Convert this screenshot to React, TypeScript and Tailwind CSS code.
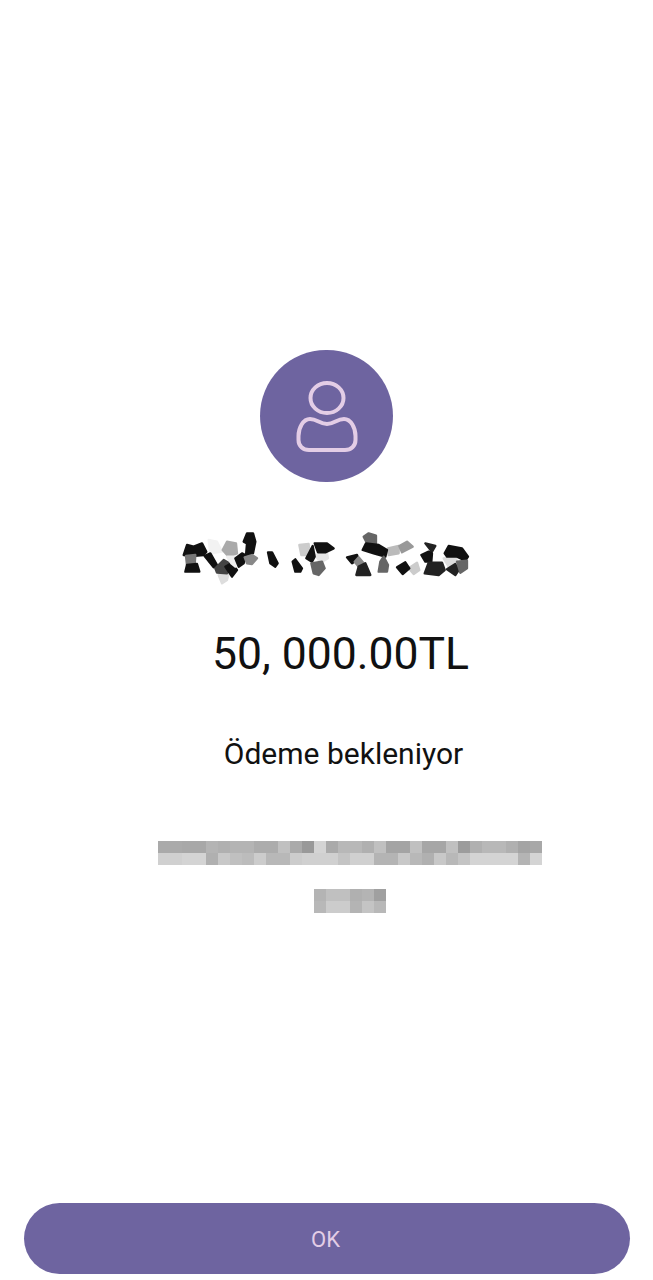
const scribbles: [string, string][] = [
  ["#f2f2f2", "110,60 135,65 150,95 115,100"],
  ["#111", "35,105 45,75 65,80 90,70 103,95 95,105 60,108"],
  ["#777", "42,108 70,105 68,135 45,135"],
  ["#111", "40,155 45,135 75,132 82,155"],
  ["#111", "98,108 115,100 135,135 125,142"],
  ["#ddd", "140,165 170,160 165,180 150,190"],
  ["#444", "130,145 155,120 172,130 165,160 135,158"],
  ["#111", "160,140 178,130 195,150 180,170"],
  ["#aaa", "152,90 165,65 192,70 195,100 170,110"],
  ["#eee", "165,110 190,110 190,140 178,130"],
  ["#111", "190,115 210,100 220,105 215,130 200,140"],
  ["#111", "222,105 225,70 215,65 225,40 243,40 250,65 243,100"],
  ["#888", "218,112 240,105 255,115 240,132 225,130"],
  ["#111", "288,97 300,97 317,130 310,140 295,130"],
  ["#111", "362,125 370,118 390,145 385,155 370,155"],
  ["#ccc", "382,75 410,72 412,105 388,105"],
  ["#e5e5e5", "430,105 465,100 468,115 445,128"],
  ["#111", "403,115 422,78 428,110 420,125"],
  ["#111", "428,70 465,70 485,85 460,97 438,97"],
  ["#666", "418,130 450,125 458,145 440,165 425,160"],
  ["#111", "525,112 555,105 560,118 540,130"],
  ["#888", "548,125 560,112 575,130 560,140"],
  ["#222", "553,165 560,140 580,130 595,165"],
  ["#666", "575,50 590,40 612,47 612,70 585,70"],
  ["#bbb", "648,85 680,78 680,100 650,105"],
  ["#999", "682,78 705,65 722,80 690,97"],
  ["#111", "572,90 582,70 620,75 645,90 640,110 605,100"],
  ["#666", "620,155 625,125 635,110 648,135 645,155"],
  ["#ccc", "710,145 735,128 742,150 725,162"],
  ["#111", "675,142 700,127 712,145 692,162"],
  ["#222", "760,70 790,78 780,95"],
  ["#111", "748,105 770,95 780,100 778,125 760,125"],
  ["#222", "758,160 770,128 810,128 818,150 800,165"],
  ["#ddd", "815,115 850,110 855,125 830,140"],
  ["#111", "818,100 830,78 870,85 888,110 880,122 855,110 825,110"],
  ["#222", "825,148 850,132 860,150 850,165"],
  ["#666", "855,125 885,122 885,145 865,158"],
];

const blurTop = [
  "#aaa", "#aaa", "#a8a8a8", "#a8a8a8", "#b4b4b4", "#b0b0b0", "#b4b4b4", "#b4b4b4", "#acacac", "#acacac",
  "#c0c0c0", "#aaa", "#999", "#d4d4d4", "#aaa", "#b8b8b8", "#b8b8b8", "#b0b0b0", "#c0c0c0", "#a4a4a4",
  "#a4a4a4", "#c0c0c0", "#a6a6a6", "#a6a6a6", "#c0c0c0", "#9c9c9c", "#b0b0b0", "#b8b8b8", "#b8b8b8", "#b0b0b0",
  "#a4a4a4", "#a8a8a8",
];
const blurBottom = [
  "#d0d0d0", "#d0d0d0", "#d4d4d4", "#d4d4d4", "#b0b0b0", "#c8c8c8", "#c0c0c0", "#bcbcbc", "#cccccc", "#b8b8b8",
  "#b8b8b8", "#ccc", "#d0d0d0", "#d0d0d0", "#d0d0d0", "#c4c4c4", "#d0d0d0", "#d0d0d0", "#b4b4b4", "#b4b4b4",
  "#c8c8c8", "#b8b8b8", "#b0b0b0", "#c8c8c8", "#b8b8b8", "#c4c4c4", "#d4d4d4", "#d4d4d4", "#d4d4d4", "#d4d4d4",
  "#b4b4b4", "#d4d4d4",
];
const blurShortTop = ["#b4b4b4", "#c0c0c0", "#c0c0c0", "#b0b0b0", "#b4b4b4", "#a0a0a0"];
const blurShortBottom = ["#b8b8b8", "#cccccc", "#cccccc", "#b4b4b4", "#c4c4c4", "#b8b8b8"];

function BlurRow({ colors }: { colors: string[] }) {
  return (
    <div className="flex">
      {colors.map((c, i) => (
        <div key={i} className="w-3 h-3" style={{ backgroundColor: c }} />
      ))}
    </div>
  );
}

export default function App() {
  return (
    <div className="w-[653px] h-[1280px] bg-white flex flex-col items-center font-['Roboto',sans-serif] pt-[350px] pb-[6px]">
      <div className="w-[133px] h-[132px] rounded-full bg-[#6e64a0] flex items-center justify-center">
        <svg width="64" height="76" viewBox="0 0 64 76" fill="none" stroke="#e3cde6" strokeWidth="4">
          <ellipse cx="32" cy="20" rx="16.5" ry="15" />
          <path d="M15 41C22 41 25 46 32 46S42 41 49 41C56 41 60.5 50 60.5 58V62C60.5 68 56 72 50 72H14C8 72 3.5 68 3.5 62V58C3.5 50 8 41 15 41Z" />
        </svg>
      </div>

      <svg className="mt-[38px] blur-[0.4px]" width="310" height="70" viewBox="0 0 930 210" strokeWidth="7" strokeLinejoin="round">
        {scribbles.map(([fill, points], i) => (
          <polygon key={i} fill={fill} stroke={fill} points={points} />
        ))}
      </svg>

      <div className="mt-[37px] pl-[28px] text-[44.5px] leading-[54px] text-[#111]">50, 000.00TL</div>
      <div className="mt-[54px] pl-[34px] text-[30px] leading-[38px] text-[#111]">Ödeme bekleniyor</div>

      <div className="mt-[68px] pl-[47px] flex flex-col items-center">
        <div>
          <BlurRow colors={blurTop} />
          <BlurRow colors={blurBottom} />
        </div>
        <div className="mt-6">
          <BlurRow colors={blurShortTop} />
          <BlurRow colors={blurShortBottom} />
        </div>
      </div>

      <div className="mt-auto w-[606px] h-[71px] rounded-full bg-[#6e64a0] flex items-center justify-center pt-[2px] pr-[2px] text-[22px] text-[#e3cde6]">
        OK
      </div>
    </div>
  );
}
